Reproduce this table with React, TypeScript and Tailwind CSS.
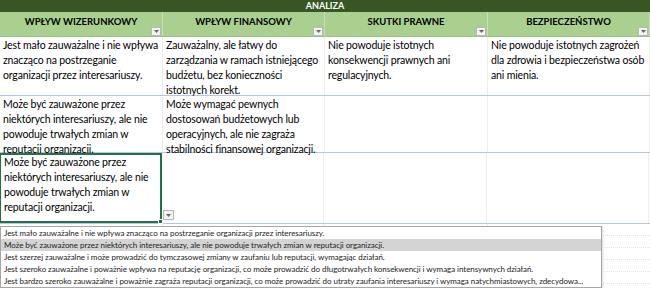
// Arkusz "Analiza" — widok tabeli z otwartą listą wyboru w komórce
import { ReactNode } from "react";

const font = { fontFamily: "Lato, 'Liberation Sans', sans-serif" };

const columns = ["WPŁYW WIZERUNKOWY", "WPŁYW FINANSOWY", "SKUTKI PRAWNE", "BEZPIECZEŃSTWO"];

const rows: { h: string; cells: string[] }[] = [
  {
    h: "h-[59px]",
    cells: [
      "Jest mało zauważalne i nie wpływa znacząco na postrzeganie organizacji przez interesariuszy.",
      "Zauważalny, ale łatwy do zarządzania w ramach istniejącego budżetu, bez konieczności istotnych korekt.",
      "Nie powoduje istotnych konsekwencji prawnych ani regulacyjnych.",
      "Nie powoduje istotnych zagrożeń dla zdrowia i bezpieczeństwa osób ani mienia.",
    ],
  },
  {
    h: "h-[57px]",
    cells: [
      "Może być zauważone przez niektórych interesariuszy, ale nie powoduje trwałych zmian w reputacji organizacji.",
      "Może wymagać pewnych dostosowań budżetowych lub operacyjnych, ale nie zagraża stabilności finansowej organizacji.",
      "",
      "",
    ],
  },
];

const options = [
  "Jest mało zauważalne i nie wpływa znacząco na postrzeganie organizacji przez interesariuszy.",
  "Może być zauważone przez niektórych interesariuszy, ale nie powoduje trwałych zmian w reputacji organizacji.",
  "Jest szerzej zauważalne i może prowadzić do tymczasowej zmiany w zaufaniu lub reputacji, wymagając działań.",
  "Jest szeroko zauważalne i poważnie wpływa na reputację organizacji, co może prowadzić do długotrwałych konsekwencji i wymaga intensywnych działań.",
  "Jest bardzo szeroko zauważalne i poważnie zagraża reputacji organizacji, co może prowadzić do utraty zaufania interesariuszy i wymaga natychmiastowych, zdecydowa...",
];

const colW = ["w-[163px]", "w-[162px]", "w-[163px]", "w-[162px]"];

function Arrow() {
  return (
    <svg width="5" height="3" viewBox="0 0 5 3">
      <path d="M0 0h5L2.5 3z" fill="#666" />
    </svg>
  );
}

function FilterButton() {
  return (
    <div className="w-[10px] h-[9px] bg-[#f3f3f3] border border-[#b8b8b8] flex items-center justify-center">
      <Arrow />
    </div>
  );
}

function Cell({ w, children }: { w: string; children?: ReactNode }) {
  return (
    <div className={`${w} shrink-0 border-r border-[#ececec] px-[3px] pt-[1px] text-[10.5px] leading-[15px] tracking-[-0.15px] text-black`}>
      {children}
    </div>
  );
}

export default function App() {
  return (
    <div className="relative w-[650px] h-[288px] overflow-hidden bg-white" style={font}>
      {/* Pasek tytułu */}
      <div className="h-[12px] bg-[#375623] text-white text-[9px] font-bold leading-[12px] text-center">
        ANALIZA
      </div>

      {/* Nagłówki kolumn */}
      <div className="flex h-[25px] bg-[#a9d08e] border-b border-[#9bc27f]">
        {columns.map((c, i) => (
          <div key={c} className={`${colW[i]} shrink-0 flex flex-col border-r border-[#c6dfb4]`}>
            <div className="pt-[5px] text-center text-[9.5px] font-bold leading-[10px] text-black">{c}</div>
            <div className="mt-auto flex justify-end pr-[1px] pb-[1px]">
              <FilterButton />
            </div>
          </div>
        ))}
      </div>

      {/* Wiersze danych */}
      {rows.map((r, ri) => (
        <div key={ri} className={`flex ${r.h} border-b border-[#b4c6e7]`}>
          {r.cells.map((t, ci) => (
            <Cell key={ci} w={colW[ci]}>
              {t}
            </Cell>
          ))}
        </div>
      ))}

      {/* Wiersz z aktywną komórką */}
      <div className="flex h-[71px] border-b border-[#b4c6e7]">
        <div className="relative w-[163px] shrink-0 border-2 border-[#217346] -ml-px px-[3px] text-[10.5px] leading-[15px] tracking-[-0.15px] text-black">
          {options[1]}
          <div className="absolute -right-[3px] -bottom-[3px] w-[5px] h-[5px] bg-[#217346] border border-white" />
          <div className="absolute -right-[14px] bottom-[1px] w-[11px] h-[10px] bg-[#f3f3f3] border border-[#b8b8b8] flex items-center justify-center">
            <Arrow />
          </div>
        </div>
        <Cell w={colW[1]} />
        <Cell w={colW[2]} />
        <Cell w={colW[3]} />
      </div>

      {/* Puste wiersze arkusza */}
      {[0, 1, 2, 3, 4].map((i) => (
        <div key={i} className="flex h-[12px] border-b border-dotted border-[#e2e2e2]">
          <div className="w-[163px] shrink-0 border-r border-[#ececec]" />
          <div className="w-[162px] shrink-0 border-r border-[#ececec]" />
          <div className="w-[163px] shrink-0 border-r border-[#ececec]" />
          <div className="w-[162px] shrink-0" />
        </div>
      ))}

      {/* Lista rozwijana */}
      <div className="absolute left-0 top-[226px] w-[602px] bg-white border border-[#a6a6a6] shadow-[1px_1px_2px_rgba(0,0,0,0.15)]">
        {options.map((o, i) => (
          <div
            key={i}
            className={`h-[12px] px-[3px] text-[8px] leading-[12px] tracking-[-0.05px] text-[#222] whitespace-nowrap overflow-hidden ${
              i === 1 ? "bg-[#d4d4d4]" : ""
            }`}
          >
            {o}
          </div>
        ))}
      </div>
    </div>
  );
}
